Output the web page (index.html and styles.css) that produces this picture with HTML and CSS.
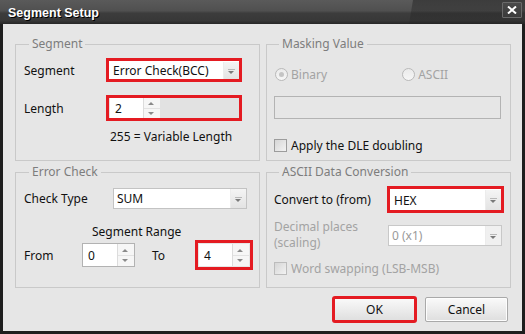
FILE: index.html
```html
<!DOCTYPE html>
<html lang="en">
<head>
    <meta charset="UTF-8">
    <meta name="viewport" content="width=device-width, initial-scale=1.0">
    <title>Segment Setup</title>
    <link rel="stylesheet" href="styles.css">
</head>
<body>
    <div class="window">
        <div class="titlebar">
            <span class="title">Segment Setup</span>
            <button class="close" type="button">
                <svg width="10" height="8" viewBox="0 0 10 8"><path d="M1 0.5 L9 7.5 M9 0.5 L1 7.5" stroke="#fff" stroke-width="2"/></svg>
            </button>
        </div>
        <div class="content">
            <div class="groups">
                <!-- Segment -->
                <fieldset class="group group-segment">
                    <legend>Segment</legend>
                    <div class="row row-seg">
                        <span class="label">Segment</span>
                        <span class="mark mark-seg">
                            <span class="combo">
                                <span class="value">Error Check(BCC)</span>
                                <span class="drop"></span>
                            </span>
                        </span>
                    </div>
                    <div class="row row-len">
                        <span class="label">Length</span>
                        <span class="mark mark-len">
                            <span class="spin spin-len">
                                <span class="value">2</span>
                                <span class="spin-btns"><span class="up"></span><span class="down"></span></span>
                            </span>
                        </span>
                    </div>
                    <div class="note">255 = Variable Length</div>
                </fieldset>

                <!-- Masking Value -->
                <fieldset class="group group-mask disabled">
                    <legend>Masking Value</legend>
                    <div class="row row-radio">
                        <span class="radio checked"></span><span class="radio-text">Binary</span>
                        <span class="radio radio-ascii"></span><span class="radio-text">ASCII</span>
                    </div>
                    <div class="textbox"></div>
                    <div class="row row-check">
                        <span class="check"></span><span class="check-text enabled">Apply the DLE doubling</span>
                    </div>
                </fieldset>

                <!-- Error Check -->
                <fieldset class="group group-error">
                    <legend>Error Check</legend>
                    <div class="row row-type">
                        <span class="label">Check Type</span>
                        <span class="combo combo-type">
                            <span class="value">SUM</span>
                            <span class="drop"></span>
                        </span>
                    </div>
                    <div class="range-title">Segment Range</div>
                    <div class="row row-range">
                        <span class="label label-from">From</span>
                        <span class="spin spin-from">
                            <span class="value">0</span>
                            <span class="spin-btns"><span class="up"></span><span class="down"></span></span>
                        </span>
                        <span class="label label-to">To</span>
                        <span class="mark mark-to">
                            <span class="spin spin-to">
                                <span class="value">4</span>
                                <span class="spin-btns"><span class="up"></span><span class="down"></span></span>
                            </span>
                        </span>
                    </div>
                </fieldset>

                <!-- ASCII Data Conversion -->
                <fieldset class="group group-ascii">
                    <legend>ASCII Data Conversion</legend>
                    <div class="row row-conv">
                        <span class="label label-conv">Convert to (from)</span>
                        <span class="mark mark-conv">
                            <span class="combo">
                                <span class="value">HEX</span>
                                <span class="drop"></span>
                            </span>
                        </span>
                    </div>
                    <div class="row row-dec">
                        <span class="label label-dec">Decimal places<br>(scaling)</span>
                        <span class="combo combo-dec">
                            <span class="value">0 (x1)</span>
                            <span class="drop"></span>
                        </span>
                    </div>
                    <div class="row row-swap">
                        <span class="check"></span><span class="check-text">Word swapping (LSB-MSB)</span>
                    </div>
                </fieldset>
            </div>

            <div class="buttons">
                <button type="button" class="btn btn-ok">OK</button>
                <button type="button" class="btn">Cancel</button>
            </div>
        </div>
    </div>
</body>
</html>
```

FILE: styles.css
```css
body {
    margin: 0;
    padding: 0;
    font-family: "Noto Sans", "Liberation Sans", sans-serif;
    font-size: 12px;
    color: #111;
    background: #222;
}

.window {
    width: 525px;
    height: 334px;
    display: flex;
    flex-direction: column;
}

/* Title bar */
.titlebar {
    position: relative;
    height: 24px;
    flex: none;
    display: flex;
    align-items: center;
    justify-content: space-between;
    padding: 0 3px 0 8px;
    box-sizing: border-box;
    background: linear-gradient(#5a5a5a 0, #505050 45%, #3c3c3c 55%, #383838 85%, #272727 100%);
}

.titlebar::after {
    content: "";
    position: absolute;
    top: 0;
    right: 0;
    bottom: 0;
    left: 409px;
    background: linear-gradient(rgba(0, 0, 0, 0.33), rgba(0, 0, 0, 0.05));
    clip-path: polygon(4px 0, 100% 0, 100% 100%, 0 100%);
}

.title {
    color: #fff;
    font-family: "Liberation Sans", Arial, sans-serif;
    font-weight: bold;
    font-size: 12.5px;
    text-shadow: 1px 1px 0 #000;
    margin-top: 2px;
}

.close {
    position: relative;
    z-index: 1;
    width: 20px;
    height: 16px;
    margin-top: -4px;
    padding: 0;
    display: flex;
    align-items: center;
    justify-content: center;
    background: linear-gradient(#4a4a4a, #3a3a3a);
    border: 1px solid #6a6a6a;
    border-radius: 1px;
}

/* Dialog body */
.content {
    flex: 1;
    background: #e6e6e6;
    border: 3px solid #1e1e1e;
    border-top: none;
    padding: 12px 11px 0 12px;
    display: flex;
    flex-direction: column;
}

.groups {
    display: grid;
    grid-template-columns: 245px 245px;
    grid-template-rows: 125px 124px;
    column-gap: 6px;
    row-gap: 3px;
}

.group {
    margin: 0;
    padding: 0 0 0 8px;
    border: 1px solid #c9c9c9;
    min-width: 0;
    box-sizing: border-box;
}

.group legend {
    color: #7d7d7d;
    line-height: 16px;
    padding: 0 3px;
    margin-left: 5px;
}

.group-mask,
.group-ascii {
    padding-left: 7px;
}

.row {
    display: flex;
    align-items: center;
}

.label {
    flex: none;
}

/* Red highlight boxes */
.mark {
    display: flex;
    border: 3px solid #e41b22;
    box-sizing: border-box;
}

/* Combo box */
.combo {
    display: flex;
    align-items: stretch;
    background: #fff;
    box-sizing: border-box;
}

.combo .value {
    flex: 1;
    padding-left: 3px;
    display: flex;
    align-items: center;
}

.drop {
    width: 15px;
    position: relative;
    background: linear-gradient(#f4f4f4, #e3e3e3);
    border-left: 1px solid #ececec;
}

.drop::before {
    content: "";
    position: absolute;
    left: 4px;
    top: calc(50% - 2px);
    width: 7px;
    border-top: 1px solid #b8b8b8;
}

.drop::after {
    content: "";
    position: absolute;
    left: 4px;
    top: 50%;
    border-left: 3.5px solid transparent;
    border-right: 3.5px solid transparent;
    border-top: 3px solid #7a7a7a;
}

/* Spin box */
.spin {
    display: flex;
    background: #fff;
    box-sizing: border-box;
}

.spin .value {
    flex: 1;
    padding-left: 5px;
    display: flex;
    align-items: center;
}

.spin-btns {
    width: 16px;
    display: flex;
    flex-direction: column;
    border-left: 1px solid #dcdcdc;
    background: #f6f6f6;
}

.spin-btns span {
    flex: 1;
    position: relative;
}

.spin-btns .up {
    border-bottom: 1px solid #e2e2e2;
}

.spin-btns .up::after {
    content: "";
    position: absolute;
    left: 4px;
    bottom: 3px;
    border-left: 3.5px solid transparent;
    border-right: 3.5px solid transparent;
    border-bottom: 3px solid #8a8a8a;
}

.spin-btns .down::after {
    content: "";
    position: absolute;
    left: 4px;
    top: 3px;
    border-left: 3.5px solid transparent;
    border-right: 3.5px solid transparent;
    border-top: 3px solid #8a8a8a;
}

/* Segment group */
.row-seg {
    margin-top: 6px;
    height: 24px;
}

.row-seg .label,
.row-len .label {
    width: 82px;
}

.mark-seg {
    width: 136px;
    height: 24px;
}

.mark-seg .combo {
    flex: 1;
    padding: 1px 0 0 1px;
}

.row-len {
    margin-top: 13px;
    height: 26px;
}

.mark-len {
    width: 136px;
    height: 26px;
    background: #e2e2e2;
    padding: 0 0 0 1px;
}

.spin-len {
    width: 50px;
}

.note {
    margin: 8px 0 0 86px;
    line-height: 16px;
}

/* Error check group */
.row-type {
    margin-top: 8px;
    height: 21px;
}

.row-type .label {
    width: 89px;
}

.combo-type {
    width: 134px;
    height: 21px;
    border: 1px solid #c3c3c3;
}

.range-title {
    margin: 15px 0 0 68px;
    line-height: 16px;
}

.row-range {
    height: 30px;
}

.label-from {
    width: 58px;
}

.spin-from {
    width: 53px;
    height: 24px;
    border: 1px solid #b2b2b2;
}

.label-to {
    margin-left: 17px;
    width: 43px;
}

.mark-to {
    width: 58px;
    height: 30px;
    padding: 1px;
}

.spin-to {
    flex: 1;
}

/* Masking group (disabled) */
.disabled .radio-text {
    color: #a3a3a3;
}

.row-radio {
    margin-top: 14px;
    height: 16px;
}

.radio {
    width: 11px;
    height: 11px;
    border: 1px solid #b9b9b9;
    border-radius: 50%;
    background: linear-gradient(#eaeaea, #f6f6f6);
    margin: 0 3px 0 1px;
    position: relative;
}

.radio.checked::after {
    content: "";
    position: absolute;
    left: 3px;
    top: 3px;
    width: 5px;
    height: 5px;
    border-radius: 50%;
    background: #c4c4c4;
}

.radio-ascii {
    margin-left: 75px;
}

.textbox {
    margin-top: 14px;
    width: 227px;
    height: 23px;
    border: 1px solid #b3b3b3;
    box-sizing: border-box;
}

.row-check {
    margin-top: 18px;
    height: 16px;
}

.check {
    width: 11px;
    height: 11px;
    border: 1px solid #9c9c9c;
    background: linear-gradient(135deg, #d6d6d6, #f2f2f2);
    margin-right: 4px;
}

.check-text {
    color: #a3a3a3;
}

.check-text.enabled {
    color: #111;
}

/* ASCII conversion group */
.row-conv {
    margin-top: 6px;
    height: 27px;
}

.label-conv {
    width: 113px;
}

.mark-conv {
    width: 117px;
    height: 27px;
}

.mark-conv .combo {
    flex: 1;
    padding: 1px 0 0 1px;
}

.row-dec {
    margin-top: 12px;
    height: 21px;
}

.label-dec {
    width: 114px;
    color: #a3a3a3;
    line-height: 16px;
    margin-top: -1px;
}

.combo-dec {
    width: 114px;
    height: 21px;
    border: 1px solid #c8c8c8;
    color: #9a9a9a;
}

.combo-dec .drop {
    background: #f0f0f0;
}

.row-swap {
    margin-top: 14px;
    height: 16px;
}

.row-swap .check {
    border-color: #bcbcbc;
}

/* Buttons */
.buttons {
    display: flex;
    justify-content: flex-end;
    gap: 9px;
    margin-top: 9px;
    padding-right: 3px;
}

.btn {
    width: 83px;
    height: 25px;
    font-family: inherit;
    font-size: 12px;
    color: #111;
    border: 1px solid #a9a9a9;
    border-radius: 2px;
    background: linear-gradient(#fafafa, #ececec 50%, #dedede);
    box-shadow: inset 0 0 0 1px #fdfdfd;
    padding: 0;
}

.btn-ok {
    outline: 3px solid #e41b22;
    outline-offset: -2px;
}
```
